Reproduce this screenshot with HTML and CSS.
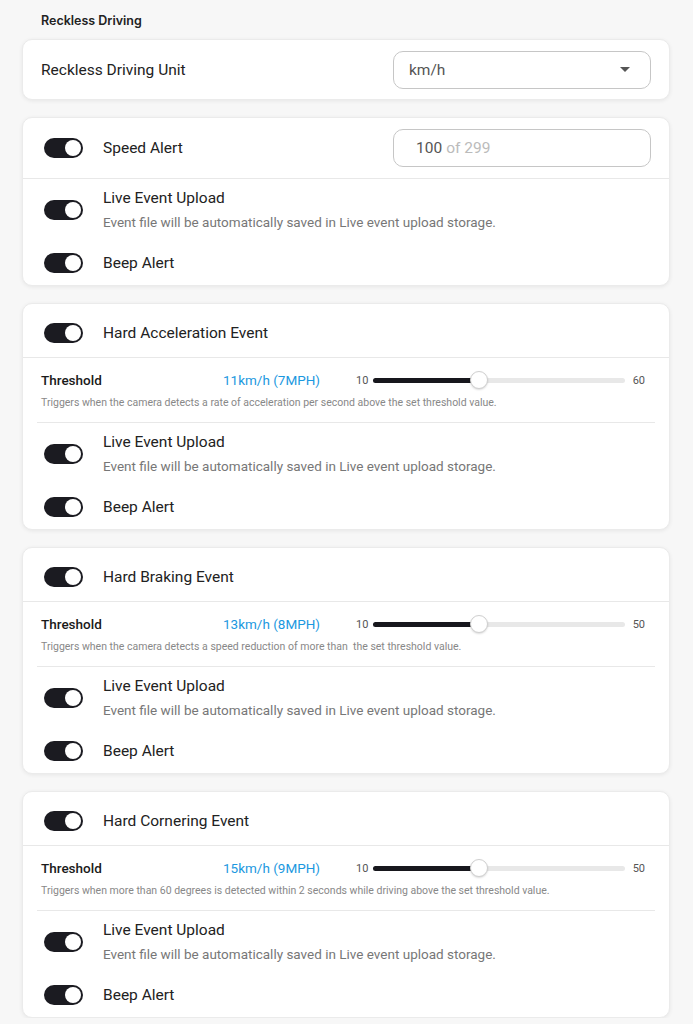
FILE: index.html
```html
<!DOCTYPE html>
<html lang="en">
<head>
<meta charset="utf-8">
<title>Reckless Driving</title>
<link rel="stylesheet" href="styles.css">
</head>
<body>
<div class="page">
  <div class="section-title">Reckless Driving</div>

  <div class="card unit-card">
    <div class="unit-label">Reckless Driving Unit</div>
    <div class="select">
      <span>km/h</span>
      <span class="caret"></span>
    </div>
  </div>

  <div class="card">
    <div class="head-row speed-row">
      <span class="toggle"></span>
      <span class="row-label">Speed Alert</span>
      <div class="num-input"><span class="num">100</span><span class="of">of 299</span></div>
    </div>
    <div class="sub-group">
      <div class="sub-row live">
        <span class="toggle"></span>
        <div class="text-block">
          <div class="row-label">Live Event Upload</div>
          <div class="row-desc">Event file will be automatically saved in Live event upload storage.</div>
        </div>
      </div>
      <div class="sub-row">
        <span class="toggle"></span>
        <span class="row-label">Beep Alert</span>
      </div>
    </div>
  </div>

  <div class="card">
    <div class="head-row event-row">
      <span class="toggle"></span>
      <span class="row-label">Hard Acceleration Event</span>
    </div>
    <div class="threshold">
      <div class="th-line">
        <span class="th-label">Threshold</span>
        <span class="th-value">11km/h (7MPH)</span>
        <span class="th-min">10</span>
        <div class="track"><div class="fill" style="width:42%"></div><span class="thumb" style="left:42%"></span></div>
        <span class="th-max">60</span>
      </div>
      <div class="th-desc">Triggers when the camera detects a rate of acceleration per second above the set threshold value.</div>
    </div>
    <div class="inset-divider"></div>
    <div class="sub-group">
      <div class="sub-row live">
        <span class="toggle"></span>
        <div class="text-block">
          <div class="row-label">Live Event Upload</div>
          <div class="row-desc">Event file will be automatically saved in Live event upload storage.</div>
        </div>
      </div>
      <div class="sub-row">
        <span class="toggle"></span>
        <span class="row-label">Beep Alert</span>
      </div>
    </div>
  </div>

  <div class="card">
    <div class="head-row event-row">
      <span class="toggle"></span>
      <span class="row-label">Hard Braking Event</span>
    </div>
    <div class="threshold">
      <div class="th-line">
        <span class="th-label">Threshold</span>
        <span class="th-value">13km/h (8MPH)</span>
        <span class="th-min">10</span>
        <div class="track"><div class="fill" style="width:42%"></div><span class="thumb" style="left:42%"></span></div>
        <span class="th-max">50</span>
      </div>
      <div class="th-desc">Triggers when the camera detects a speed reduction of more than &nbsp;the set threshold value.</div>
    </div>
    <div class="inset-divider"></div>
    <div class="sub-group">
      <div class="sub-row live">
        <span class="toggle"></span>
        <div class="text-block">
          <div class="row-label">Live Event Upload</div>
          <div class="row-desc">Event file will be automatically saved in Live event upload storage.</div>
        </div>
      </div>
      <div class="sub-row">
        <span class="toggle"></span>
        <span class="row-label">Beep Alert</span>
      </div>
    </div>
  </div>

  <div class="card">
    <div class="head-row event-row">
      <span class="toggle"></span>
      <span class="row-label">Hard Cornering Event</span>
    </div>
    <div class="threshold">
      <div class="th-line">
        <span class="th-label">Threshold</span>
        <span class="th-value">15km/h (9MPH)</span>
        <span class="th-min">10</span>
        <div class="track"><div class="fill" style="width:42%"></div><span class="thumb" style="left:42%"></span></div>
        <span class="th-max">50</span>
      </div>
      <div class="th-desc">Triggers when more than 60 degrees is detected within 2 seconds while driving above the set threshold value.</div>
    </div>
    <div class="inset-divider"></div>
    <div class="sub-group">
      <div class="sub-row live">
        <span class="toggle"></span>
        <div class="text-block">
          <div class="row-label">Live Event Upload</div>
          <div class="row-desc">Event file will be automatically saved in Live event upload storage.</div>
        </div>
      </div>
      <div class="sub-row">
        <span class="toggle"></span>
        <span class="row-label">Beep Alert</span>
      </div>
    </div>
  </div>
</div>
</body>
</html>
```

FILE: styles.css
```css
* { box-sizing: border-box; }

html, body {
  margin: 0;
  padding: 0;
  background: #f7f7f7;
}

body {
  font-family: Roboto, "Liberation Sans", sans-serif;
  color: #222;
}

.page {
  padding: 11px 23px 0 22px;
  display: flex;
  flex-direction: column;
  gap: 17px;
}

.section-title {
  font-family: Inter, Roboto, sans-serif;
  font-size: 12.5px;
  font-weight: 600;
  color: #222;
  line-height: 20px;
  padding-left: 19px;
  margin-bottom: -9px;
}

.card {
  background: #fff;
  border: 1px solid #ebebeb;
  border-radius: 10px;
  box-shadow: 0 1px 4px rgba(0, 0, 0, 0.07);
  overflow: hidden;
}

.unit-card {
  height: 61px;
  display: flex;
  align-items: center;
  justify-content: space-between;
  padding: 0 18px 0 18px;
}

.unit-label {
  font-size: 15.5px;
  color: #222;
}

.select {
  width: 258px;
  height: 38px;
  border: 1px solid #c6c6c6;
  border-radius: 10px;
  display: flex;
  align-items: center;
  justify-content: space-between;
  padding: 0 20px 0 15px;
  font-size: 15.5px;
  color: #555;
}

.caret {
  width: 0;
  height: 0;
  border-left: 5px solid transparent;
  border-right: 5px solid transparent;
  border-top: 5px solid #555;
}

.head-row {
  display: flex;
  align-items: center;
  padding-left: 21px;
  border-bottom: 1px solid #e8e8e8;
}

.speed-row {
  height: 61px;
  padding-right: 18px;
}

.event-row {
  padding-top: 19px;
  padding-bottom: 14px;
}

.toggle {
  position: relative;
  flex: 0 0 auto;
  width: 39px;
  height: 20px;
  border-radius: 10px;
  background: #1b1b21;
  margin-right: 20px;
}

.toggle::after {
  content: "";
  position: absolute;
  right: 2px;
  top: 2px;
  width: 16px;
  height: 16px;
  border-radius: 50%;
  background: #fff;
}

.row-label {
  font-size: 15.5px;
  line-height: 20px;
  color: #222;
}

.num-input {
  margin-left: auto;
  width: 258px;
  height: 38px;
  border: 1px solid #c6c6c6;
  border-radius: 10px;
  display: flex;
  align-items: center;
  padding-left: 22px;
  font-size: 15.5px;
}

.num { color: #555; }
.of { color: #bbb; margin-left: 4px; }

.sub-group {
  padding: 9px 0 12px 21px;
  display: flex;
  flex-direction: column;
  gap: 21px;
}

.sub-row {
  display: flex;
  align-items: center;
}

.text-block {
  display: flex;
  flex-direction: column;
  gap: 4px;
}

.row-desc {
  font-size: 13.5px;
  line-height: 20px;
  color: #777;
}

.threshold {
  padding: 12px 24px 12px 18px;
}

.th-line {
  display: flex;
  align-items: center;
  height: 20px;
}

.th-label {
  width: 182px;
  font-size: 13.5px;
  font-weight: 500;
  color: #1a1a1a;
}

.th-value {
  width: 133px;
  font-size: 13.5px;
  color: #1b98e0;
}

.th-min, .th-max {
  font-size: 11px;
  color: #555;
}

.th-min { margin-right: 5px; }
.th-max { margin-left: 8px; }

.track {
  position: relative;
  flex: 1;
  height: 5px;
  border-radius: 3px;
  background: #e8e8e8;
}

.fill {
  height: 100%;
  border-radius: 3px;
  background: #17171d;
}

.thumb {
  position: absolute;
  top: 50%;
  width: 18px;
  height: 18px;
  margin: -9px 0 0 -9px;
  border-radius: 50%;
  background: #fff;
  border: 1px solid #d0d0d0;
  box-shadow: 0 1px 2px rgba(0, 0, 0, 0.15);
}

.th-desc {
  margin-top: 6px;
  font-size: 10.5px;
  line-height: 14px;
  color: #888;
}

.inset-divider {
  height: 1px;
  background: #e8e8e8;
  margin: 0 14px;
}
```
